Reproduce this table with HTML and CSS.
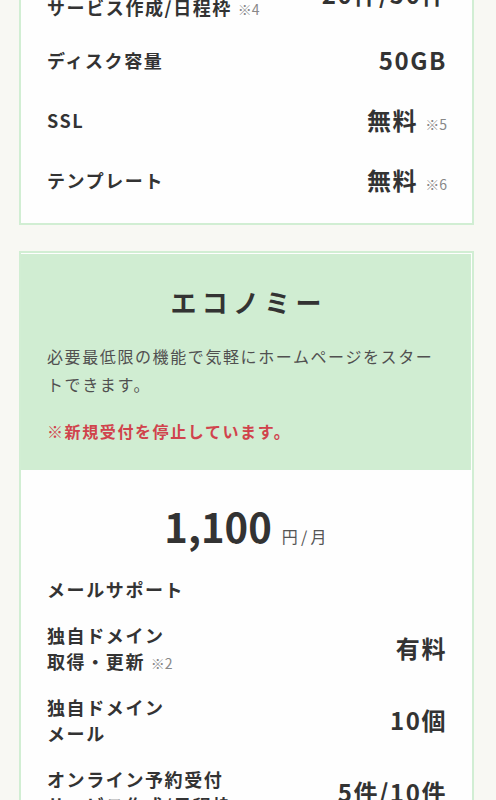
FILE: index.html
```html
<!DOCTYPE html>
<html lang="ja">
<head>
<meta charset="utf-8">
<link rel="stylesheet" href="styles.css">
</head>
<body>
<div class="page">
  <section class="card">
    <div class="card-body">
      <div class="row">
        <div class="label">オンライン予約受付<br>サービス作成/日程枠 <span class="note">※4</span></div>
        <div class="value">20件/50件</div>
      </div>
      <div class="row">
        <div class="label">ディスク容量</div>
        <div class="value">50GB</div>
      </div>
      <div class="row">
        <div class="label">SSL</div>
        <div class="value">無料 <span class="note">※5</span></div>
      </div>
      <div class="row">
        <div class="label">テンプレート</div>
        <div class="value">無料 <span class="note">※6</span></div>
      </div>
    </div>
  </section>

  <section class="card">
    <header class="card-head">
      <h2 class="plan-title">エコノミー</h2>
      <p class="plan-desc">必要最低限の機能で気軽にホームページをスタートできます。</p>
      <p class="plan-alert">※新規受付を停止しています。</p>
    </header>
    <div class="card-body">
      <div class="price"><span class="price-num">1,100</span><span class="price-unit">円/月</span></div>
      <div class="row">
        <div class="label">メールサポート</div>
      </div>
      <div class="row">
        <div class="label">独自ドメイン<br>取得・更新 <span class="note">※2</span></div>
        <div class="value">有料</div>
      </div>
      <div class="row">
        <div class="label">独自ドメイン<br>メール</div>
        <div class="value">10個</div>
      </div>
      <div class="row">
        <div class="label">オンライン予約受付<br>サービス作成/日程枠 <span class="note">※4</span></div>
        <div class="value">5件/10件</div>
      </div>
    </div>
  </section>
</div>
</body>
</html>
```

FILE: styles.css
```css
html, body {
  margin: 0;
  padding: 0;
  background: #f8f8f3;
}
body {
  font-family: "Noto Sans CJK JP", "Noto Sans", sans-serif;
  color: #333;
  letter-spacing: 0.1em;
  overflow: hidden;
}
.page {
  margin-top: -44px;
  padding: 0 22px 0 19px;
}
.card {
  border: 2px solid #d1eed3;
  background: #fefefe;
  margin-bottom: 26px;
}
.card-head {
  background: #d0edd2;
  margin: 1px 1px 0 0;
  padding: 28px 26px 25px;
}
.plan-title {
  margin: 0;
  padding-left: 0.2em;
  text-align: center;
  font-size: 26px;
  line-height: 39px;
  font-weight: 700;
  letter-spacing: 0.2em;
}
.plan-desc {
  margin: 21px 0 0;
  font-size: 16px;
  line-height: 28px;
  font-weight: 400;
  color: #505050;
}
.plan-alert {
  margin: 19px 0 0;
  font-size: 16px;
  line-height: 28px;
  font-weight: 700;
  color: #d0434c;
}
.card-body {
  padding: 0 25px 13px 26px;
}
.price {
  padding-top: 26px;
  margin-bottom: 10px;
  text-align: center;
  height: 60px;
  line-height: 60px;
}
.price-num {
  font-size: 40px;
  font-weight: 700;
  letter-spacing: 0;
}
.price-unit {
  font-size: 16px;
  line-height: 1;
  color: #555;
  margin-left: 10px;
  letter-spacing: 0.2em;
}
.row {
  display: flex;
  justify-content: space-between;
  align-items: center;
  padding: 10px 0;
}
.label {
  font-size: 18px;
  line-height: 26px;
  font-weight: 700;
}
.value {
  font-size: 24px;
  line-height: 40px;
  height: 40px;
  font-weight: 700;
  text-align: right;
  white-space: nowrap;
}
.note {
  font-size: 14px;
  line-height: 1;
  font-weight: 400;
  color: #888;
  letter-spacing: 0;
}
```
